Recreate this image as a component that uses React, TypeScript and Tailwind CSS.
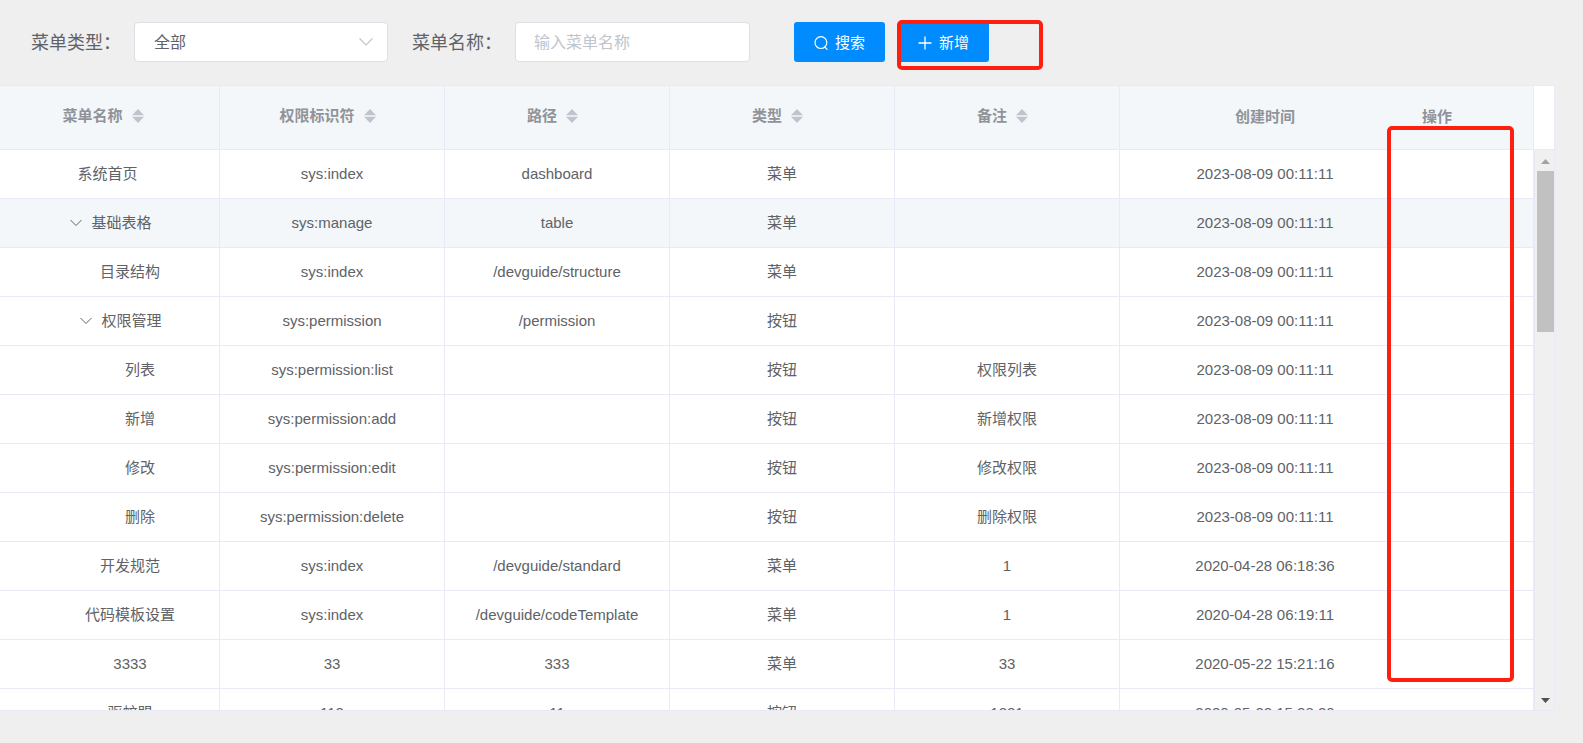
import { useState } from 'react'
import type { ReactNode } from 'react'

interface MenuRow {
  name: string
  perm: string
  path: string
  type: '菜单' | '按钮'
  remark: string
  createdAt: string
  level: 0 | 1 | 2
  expandable?: boolean
}

const rows: MenuRow[] = [
  { name: '系统首页', perm: 'sys:index', path: 'dashboard', type: '菜单', remark: '', createdAt: '2023-08-09 00:11:11', level: 0 },
  { name: '基础表格', perm: 'sys:manage', path: 'table', type: '菜单', remark: '', createdAt: '2023-08-09 00:11:11', level: 0, expandable: true },
  { name: '目录结构', perm: 'sys:index', path: '/devguide/structure', type: '菜单', remark: '', createdAt: '2023-08-09 00:11:11', level: 1 },
  { name: '权限管理', perm: 'sys:permission', path: '/permission', type: '按钮', remark: '', createdAt: '2023-08-09 00:11:11', level: 1, expandable: true },
  { name: '列表', perm: 'sys:permission:list', path: '', type: '按钮', remark: '权限列表', createdAt: '2023-08-09 00:11:11', level: 2 },
  { name: '新增', perm: 'sys:permission:add', path: '', type: '按钮', remark: '新增权限', createdAt: '2023-08-09 00:11:11', level: 2 },
  { name: '修改', perm: 'sys:permission:edit', path: '', type: '按钮', remark: '修改权限', createdAt: '2023-08-09 00:11:11', level: 2 },
  { name: '删除', perm: 'sys:permission:delete', path: '', type: '按钮', remark: '删除权限', createdAt: '2023-08-09 00:11:11', level: 2 },
  { name: '开发规范', perm: 'sys:index', path: '/devguide/standard', type: '菜单', remark: '1', createdAt: '2020-04-28 06:18:36', level: 1 },
  { name: '代码模板设置', perm: 'sys:index', path: '/devguide/codeTemplate', type: '菜单', remark: '1', createdAt: '2020-04-28 06:19:11', level: 1 },
  { name: '3333', perm: '33', path: '333', type: '菜单', remark: '33', createdAt: '2020-05-22 15:21:16', level: 1 },
  { name: '驱蚊盟', perm: '112', path: '11', type: '按钮', remark: '1221', createdAt: '2020-05-22 15:28:20', level: 1 },
]

// left padding per tree level; leaf rows also reserve room for the arrow
const indent = ['pl-0', 'pl-5', 'pl-10']
const leafIndent = ['pl-0', 'pl-[45px]', 'pl-[65px]']

function ChevronDown({ className }: { className?: string }) {
  return (
    <svg viewBox="0 0 12 12" className={className} fill="none" stroke="currentColor" aria-hidden="true">
      <path d="M0.5 3 L6 8.5 L11.5 3" />
    </svg>
  )
}

function SortCaret() {
  return (
    <svg viewBox="0 0 12 14" className="mx-[9px] h-3.5 w-3 shrink-0" fill="#c0c4cc" aria-hidden="true">
      <path d="M6 0 L12 6.3 H0 Z M0 7.7 H12 L6 14 Z" />
    </svg>
  )
}

function HeadCell({ children, sortable, className = '' }: { children: ReactNode; sortable?: boolean; className?: string }) {
  return (
    <th
      className={`sticky top-0 h-16 border-b border-[#e8ebf5] bg-[#f3f7fa] pt-0 font-bold text-[#909399] ${sortable ? 'pb-1' : 'pb-0.5'} ${className}`}
    >
      {sortable ? (
        <button type="button" className="inline-flex items-center align-top font-bold">
          {children}
          <SortCaret />
        </button>
      ) : (
        children
      )}
    </th>
  )
}

function NameCell({ row }: { row: MenuRow }) {
  if (!row.expandable) {
    return <span className={leafIndent[row.level]}>{row.name}</span>
  }
  return (
    <span className={`inline-flex items-center align-top ${indent[row.level]}`}>
      <button type="button" aria-label="收起" className="mr-[3px] flex w-[25px] justify-center">
        <ChevronDown className="size-3" />
      </button>
      {row.name}
    </span>
  )
}

export default function App() {
  const [type, setType] = useState('all')
  const [name, setName] = useState('')
  const [active, setActive] = useState(1)

  return (
    <div className="flex h-screen flex-col overflow-hidden bg-[#efefef] pb-8 font-['Liberation_Sans','Noto_Sans_CJK_SC',sans-serif] text-[15px] text-[#606266]">
      {/* Filter bar */}
      <form className="flex h-[85px] shrink-0 items-start pt-[22px] pl-[31px]" onSubmit={(e) => e.preventDefault()}>
        <label htmlFor="menu-type" className="w-[103px] shrink-0 pt-px text-lg leading-10 whitespace-nowrap">
          菜单类型：
        </label>
        <div className="relative w-[254px]">
          <select
            id="menu-type"
            value={type}
            onChange={(e) => setType(e.target.value)}
            className="h-10 w-full appearance-none rounded border border-[#dcdfe6] bg-white px-[19px] pt-0.5 text-base"
          >
            <option value="all">全部</option>
            <option value="menu">菜单</option>
            <option value="button">按钮</option>
          </select>
          <ChevronDown className="pointer-events-none absolute top-[13px] right-[15px] size-3.5 text-[#c0c4cc]" />
        </div>

        <label htmlFor="menu-name" className="ml-6 w-[103px] shrink-0 pt-px text-lg leading-10 whitespace-nowrap">
          菜单名称：
        </label>
        <input
          id="menu-name"
          value={name}
          onChange={(e) => setName(e.target.value)}
          placeholder="输入菜单名称"
          className="h-10 w-[235px] rounded border border-[#dcdfe6] bg-white px-[18px] pt-0.5 text-base placeholder:text-[#c0c4cc]"
        />

        <button type="submit" className="ml-11 flex h-10 w-[91px] items-center justify-center gap-[7px] rounded-[3px] bg-[#008cff] pt-0.5 text-white">
          <svg viewBox="0 0 14 14" className="size-3.5" fill="none" stroke="currentColor" strokeWidth="1.2" aria-hidden="true">
            <circle cx="6.9" cy="6.6" r="5.9" />
            <path d="M10.4 10.6 L13.4 13.6" />
          </svg>
          搜索
        </button>
        <div className="relative ml-[13px]">
          <button type="button" className="flex h-10 w-[91px] items-center justify-center gap-[7px] rounded-[3px] bg-[#008cff] pt-0.5 text-white">
            <svg viewBox="0 0 14 14" className="size-3.5" fill="none" stroke="currentColor" strokeWidth="1.3" aria-hidden="true">
              <path d="M7 0.5 V13.5 M0.5 7 H13.5" />
            </svg>
            新增
          </button>
          <div className="pointer-events-none absolute -top-[2px] -left-px h-[50px] w-[146px] rounded-[5px] border-4 border-[#ff1f10]" />
        </div>
      </form>

      {/* Menu tree table */}
      <div className="relative mr-7 flex min-h-0 flex-1 border-y border-r border-[#e8ebf5] bg-white">
        <div className="min-w-0 flex-1 overflow-hidden">
          <table className="w-full table-fixed border-separate border-spacing-0 text-center leading-6">
            <colgroup>
              <col className="w-[220px]" />
              <col className="w-[225px]" />
              <col className="w-[225px]" />
              <col className="w-[225px]" />
              <col className="w-[225px]" />
              <col />
              <col className="w-[124px]" />
            </colgroup>
            <thead>
              <tr>
                <HeadCell sortable className="border-r pr-1">菜单名称</HeadCell>
                <HeadCell sortable className="border-r">权限标识符</HeadCell>
                <HeadCell sortable className="border-r">路径</HeadCell>
                <HeadCell sortable className="border-r">类型</HeadCell>
                <HeadCell sortable className="border-r">备注</HeadCell>
                <HeadCell>创建时间</HeadCell>
                <HeadCell className="border-r pl-3 text-left">操作</HeadCell>
              </tr>
            </thead>
            <tbody>
              {rows.map((row, i) => (
                <tr
                  key={i}
                  onMouseEnter={() => setActive(i)}
                  className={`*:h-[49px] *:border-b *:border-[#e8ebf5] *:p-0 ${i === active ? 'bg-[#f3f7fa]' : 'bg-white'}`}
                >
                  <td className="border-r pr-1!">
                    <NameCell row={row} />
                  </td>
                  <td className="border-r">{row.perm}</td>
                  <td className="border-r">{row.path}</td>
                  <td className="border-r">{row.type}</td>
                  <td className="border-r">{row.remark}</td>
                  <td>{row.createdAt}</td>
                  <td className="border-r" />
                </tr>
              ))}
            </tbody>
          </table>
        </div>

        {/* Scrollbar */}
        <div className="flex w-5 shrink-0 flex-col" aria-hidden="true">
          <div className="h-16 shrink-0 border-b border-[#e8ebf5]" />
          <div className="flex flex-1 flex-col items-center border-l border-[#e8ebf5] bg-[#f0f0f0] pl-0.5">
            <svg viewBox="0 0 17 21" className="h-[21px] w-[17px]" fill="#a3a3a3">
              <path d="M4 14 L8.5 9 L13 14 Z" />
            </svg>
            <div className="h-[161px] w-full bg-[#c1c1c1]" />
            <svg viewBox="0 0 17 21" className="mt-auto h-[21px] w-[17px]" fill="#505050">
              <path d="M4 9 L8.5 14 L13 9 Z" />
            </svg>
          </div>
        </div>

        {/* Highlight around the action column */}
        <div className="pointer-events-none absolute top-10 right-10 bottom-7 w-[127px] rounded-[5px] border-4 border-[#ff1f10]" />
      </div>
    </div>
  )
}
